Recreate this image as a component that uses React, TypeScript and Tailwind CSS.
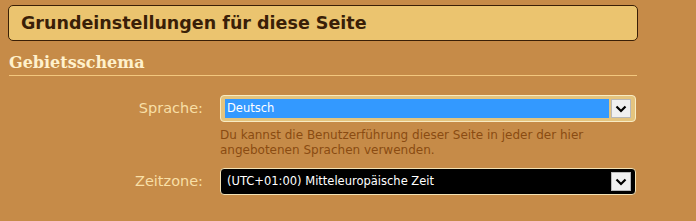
import React from 'react';

function Chevron() {
  return (
    <svg width="12" height="8" viewBox="0 0 12 8" className="block">
      <path d="M1.5 1.5 L6 6 L10.5 1.5" fill="none" stroke="#000" strokeWidth="2.2" />
    </svg>
  );
}

function SelectBox({ value, dark }: { value: string; dark?: boolean }) {
  return (
    <div
      className={
        dark
          ? 'flex h-[27px] w-[416px] items-center rounded-[4px] border border-[#f4e2b4] bg-black pl-[6px] pr-[4px]'
          : 'flex h-[27px] w-[416px] items-center rounded-[4px] border border-[#f8ecc4] bg-[#e4c47e] pl-[4px] pr-[4px]'
      }
    >
      <div
        className={
          dark
            ? 'flex h-[19px] flex-1 items-center text-[11.5px] text-white'
            : 'flex h-[19px] flex-1 items-center bg-[#3399ff] pl-[2px] text-[11.5px] text-white'
        }
      >
        {value}
      </div>
      <div className="ml-[2px] flex h-[19px] w-[20px] items-center justify-center border border-[#b8b8b8] bg-[#f0f0f0]">
        <Chevron />
      </div>
    </div>
  );
}

export default function App() {
  return (
    <div className="h-[221px] w-[696px] bg-[#c68b48] pt-[5px] font-['DejaVu_Sans',sans-serif]">
      <div className="mx-[8px] flex h-[36px] w-[630px] items-center rounded-[5px] border border-[#3a1f06] bg-[#ebc46f] pl-[12px]">
        <h1 className="text-[17.5px] font-bold text-[#3a1f08]">Grundeinstellungen für diese Seite</h1>
      </div>
      <div className="mx-[9px] mt-[12px] w-[628px] border-b border-[#f2c77e] pb-[2px]">
        <h2 className="font-['DejaVu_Serif',serif] text-[16px] font-bold leading-[20px] text-[#fff1cc]">Gebietsschema</h2>
      </div>
      <div className="mt-[19px] flex items-center">
        <label className="w-[203px] text-right text-[14.5px] text-[#f8dfa6]">Sprache:</label>
        <div className="ml-[17px]">
          <SelectBox value="Deutsch" />
        </div>
      </div>
      <div className="ml-[220px] mt-[6px] text-[12px] leading-[15px] text-[#8a4b12]">
        Du kannst die Benutzerführung dieser Seite in jeder der hier
        <br />
        angebotenen Sprachen verwenden.
      </div>
      <div className="mt-[10px] flex items-center">
        <label className="w-[203px] text-right text-[14.5px] text-[#f8dfa6]">Zeitzone:</label>
        <div className="ml-[17px]">
          <SelectBox value="(UTC+01:00) Mitteleuropäische Zeit" dark />
        </div>
      </div>
    </div>
  );
}
